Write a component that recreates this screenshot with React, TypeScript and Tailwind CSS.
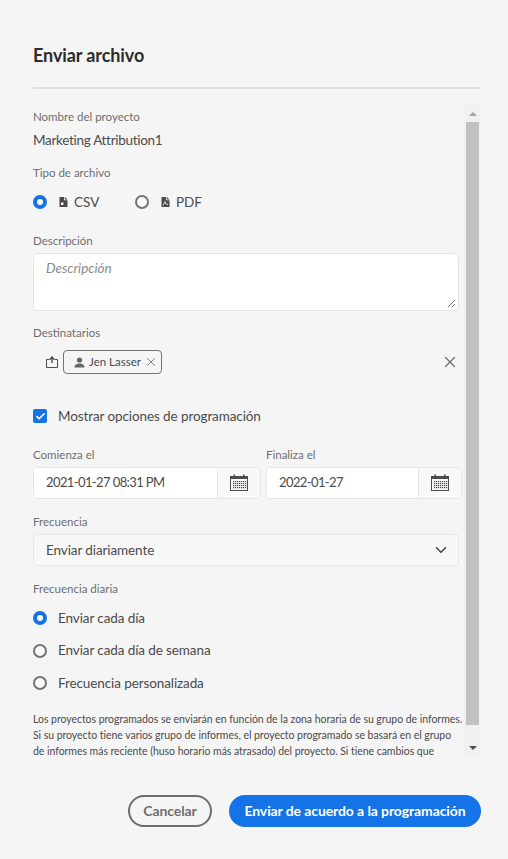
import React from "react";
import { Check, ChevronDown, X } from "lucide-react";

const FONT = "font-['Lato','Open_Sans',sans-serif]";

function FieldLabel({ children }: { children: React.ReactNode }) {
  return <div className="h-4 text-[11.5px] leading-4 text-[#6e6e6e]">{children}</div>;
}

function Radio({ checked }: { checked?: boolean }) {
  return checked ? (
    <span className="block h-3.5 w-3.5 shrink-0 rounded-full border-[4px] border-[#1473e6] bg-white" />
  ) : (
    <span className="block h-3.5 w-3.5 shrink-0 rounded-full border-2 border-[#747474] bg-[#fafafa]" />
  );
}

function FileIcon({ pdf }: { pdf?: boolean }) {
  return (
    <svg width="9" height="10" viewBox="0 0 9 10" className="shrink-0">
      <path d="M0.5 0H5.2V3.2H8.5V10H0.5Z" fill="#4b4b4b" />
      <path d="M6 0L8.5 2.5H6Z" fill="#4b4b4b" />
      {pdf ? (
        <path d="M2 8.5L4 4.5L4.8 7L7 7.5" stroke="#f5f5f5" strokeWidth="0.8" fill="none" />
      ) : (
        <rect x="2" y="5.5" width="2.5" height="2.5" fill="#f5f5f5" />
      )}
    </svg>
  );
}

function CalendarIcon() {
  const dots = [];
  for (let y = 7; y <= 13; y += 2) {
    for (let x = 3; x <= 15; x += 2) {
      dots.push(<rect key={`${x}-${y}`} x={x} y={y} width="1.2" height="1.2" fill="#4b4b4b" />);
    }
  }
  return (
    <svg width="18" height="18" viewBox="0 0 18 18">
      <rect x="0.5" y="2.5" width="17" height="14" fill="none" stroke="#4b4b4b" />
      <rect x="0.5" y="2.5" width="17" height="2.5" fill="#4b4b4b" />
      <rect x="3.5" y="0.5" width="1.5" height="3" fill="#4b4b4b" />
      <rect x="13" y="0.5" width="1.5" height="3" fill="#4b4b4b" />
      {dots}
    </svg>
  );
}

function DateField({ value, widthClass, inputClass }: { value: string; widthClass: string; inputClass: string }) {
  return (
    <div className={`flex h-8 overflow-hidden rounded-[4px] border border-[#e6e6e6] ${widthClass}`}>
      <div className={`flex items-center bg-white pl-3 text-[13px] tracking-[-0.6px] text-[#4b4b4b] ${inputClass}`}>{value}</div>
      <div className="flex flex-1 items-center justify-center border-l border-[#e6e6e6] bg-[#f8f8f8]">
        <CalendarIcon />
      </div>
    </div>
  );
}

export default function App() {
  return (
    <div className={`flex h-[859px] w-[508px] flex-col overflow-hidden bg-[#f5f5f5] pl-[33px] pr-[27px] ${FONT}`}>
      <h1 className="pt-[44px] text-[18px] font-bold leading-[22px] tracking-[-0.1px] text-[#2c2c2c]">Enviar archivo</h1>
      <div className="mt-[21px] h-0.5 bg-[#e1e1e1]" />

      <div className="mt-4 flex h-[652px] overflow-hidden">
        <div className="w-[431px] shrink-0 overflow-hidden">
          <div className="pt-1">
            <FieldLabel>Nombre del proyecto</FieldLabel>
            <div className="mt-[5px] text-[13.5px] leading-[20px] tracking-[-0.3px] text-[#4b4b4b]">Marketing Attribution1</div>
          </div>

          <div className="mt-[15px]">
            <FieldLabel>Tipo de archivo</FieldLabel>
            <div className="mt-[13px] flex h-4 items-center text-[13.5px] text-[#4b4b4b]">
              <Radio checked />
              <span className="ml-3"><FileIcon /></span>
              <span className="ml-[6px] w-[61px]">CSV</span>
              <Radio />
              <span className="ml-3"><FileIcon pdf /></span>
              <span className="ml-[6px]">PDF</span>
            </div>
          </div>

          <div className="mt-[23px]">
            <FieldLabel>Descripción</FieldLabel>
            <div className="relative mt-1 h-[58px] w-[426px] rounded-[4px] border border-[#e6e6e6] bg-white px-3 py-1 text-[13.5px] italic text-[#8a8a8a]">
              Descripción
              <svg width="9" height="9" viewBox="0 0 9 9" className="absolute bottom-[2px] right-[2px]">
                <path d="M1 8L8 1M5 8L8 5" stroke="#555" strokeWidth="0.8" />
              </svg>
            </div>
          </div>

          <div className="mt-[14px]">
            <FieldLabel>Destinatarios</FieldLabel>
            <div className="mt-[9px] flex h-6 w-[426px] items-center">
              <svg width="12" height="12" viewBox="0 0 12 12" className="ml-[13px] shrink-0">
                <path d="M3.5 3.5H0.5V11.5H11.5V3.5H8.5" fill="none" stroke="#4b4b4b" />
                <path d="M6 7V1.5M3.8 3.5L6 1L8.2 3.5" fill="none" stroke="#4b4b4b" strokeWidth="1.4" />
              </svg>
              <div className="ml-[5px] flex h-6 w-[99px] items-center rounded-[4px] border border-[#747474] pl-[10px] text-[11.5px] text-[#4b4b4b]">
                <svg width="11" height="11" viewBox="0 0 11 11" className="shrink-0">
                  <circle cx="5.500" cy="3" r="2.600" fill="#666" />
                  <path d="M0.500 10.500C0.500 7.500 3 6.500 5.500 6.500S10.500 7.500 10.500 10.500Z" fill="#666" />
                </svg>
                <span className="ml-[4px] whitespace-nowrap">Jen Lasser</span>
                <X size={14} strokeWidth={1.5} className="ml-[3px] shrink-0 text-[#6e6e6e]" />
              </div>
              <X size={18} strokeWidth={1.6} className="ml-auto mr-0 shrink-0 text-[#6e6e6e]" />
            </div>
          </div>

          <div className="mt-8 flex h-[20px] items-center text-[13.5px] tracking-[-0.1px] text-[#4b4b4b]">
            <span className="flex h-3.5 w-3.5 items-center justify-center rounded-[2px] bg-[#1473e6]">
              <Check size={11} strokeWidth={3.5} className="text-white" />
            </span>
            <span className="ml-[11px]">Mostrar opciones de programación</span>
          </div>

          <div className="mt-[21px] flex gap-[5px]">
            <div>
              <FieldLabel>Comienza el</FieldLabel>
              <div className="mt-1">
                <DateField value="2021-01-27 08:31 PM" widthClass="w-[228px]" inputClass="w-[183px]" />
              </div>
            </div>
            <div>
              <FieldLabel>Finaliza el</FieldLabel>
              <div className="mt-1">
                <DateField value="2022-01-27" widthClass="w-[196px]" inputClass="w-[151px]" />
              </div>
            </div>
          </div>

          <div className="mt-[15px]">
            <FieldLabel>Frecuencia</FieldLabel>
            <div className="mt-1 flex h-8 w-[426px] items-center justify-between rounded-[4px] border border-[#e6e6e6] bg-[#f8f8f8] pl-3 pr-[8px] text-[13.5px] tracking-[-0.1px] text-[#4b4b4b]">
              <span>Enviar diariamente</span>
              <ChevronDown size={18} strokeWidth={2.2} className="text-[#4b4b4b]" />
            </div>
          </div>

          <div className="mt-[15px]">
            <FieldLabel>Frecuencia diaria</FieldLabel>
            <div className="mt-[11px] flex flex-col gap-[12.500px] text-[13.5px] tracking-[-0.1px] text-[#4b4b4b]">
              <div className="flex h-5 items-center"><Radio checked /><span className="ml-[11px]">Enviar cada día</span></div>
              <div className="flex h-5 items-center"><Radio /><span className="ml-[11px]">Enviar cada día de semana</span></div>
              <div className="flex h-5 items-center"><Radio /><span className="ml-[11px]">Frecuencia personalizada</span></div>
            </div>
          </div>

          <p className="mt-[18px] whitespace-nowrap text-[10.5px] leading-4 tracking-[-0.04px] text-[#4b4b4b]">
            Los proyectos programados se enviarán en función de la zona horaria de su grupo de informes.
            <br />
            Si su proyecto tiene varios grupo de informes, el proyecto programado se basará en el grupo
            <br />
            de informes más reciente (huso horario más atrasado) del proyecto. Si tiene cambios que
          </p>
        </div>

        <div className="flex w-[17px] shrink-0 flex-col bg-[#f1f1f1]">
          <div className="flex h-[17px] items-center justify-center">
            <span className="h-0 w-0 border-x-[4px] border-b-[4px] border-x-transparent border-b-[#a3a3a3]" />
          </div>
          <div className="mx-0.5 h-[603px] bg-[#c1c1c1]" />
          <div className="flex flex-1 items-end justify-center pb-[7px]">
            <span className="h-0 w-0 border-x-[4px] border-t-[4px] border-x-transparent border-t-[#505050]" />
          </div>
        </div>
      </div>

      <div className="mt-[38px] flex justify-end gap-[17px] text-[14px] font-bold tracking-[-0.1px]">
        <button className="h-8 w-[84px] rounded-full border-2 border-[#6e6e6e] pb-0.5 text-[#6e6e6e]">Cancelar</button>
        <button className="h-8 w-[252px] rounded-full bg-[#1473e6] pb-0.5 text-white">Enviar de acuerdo a la programación</button>
      </div>
    </div>
  );
}
